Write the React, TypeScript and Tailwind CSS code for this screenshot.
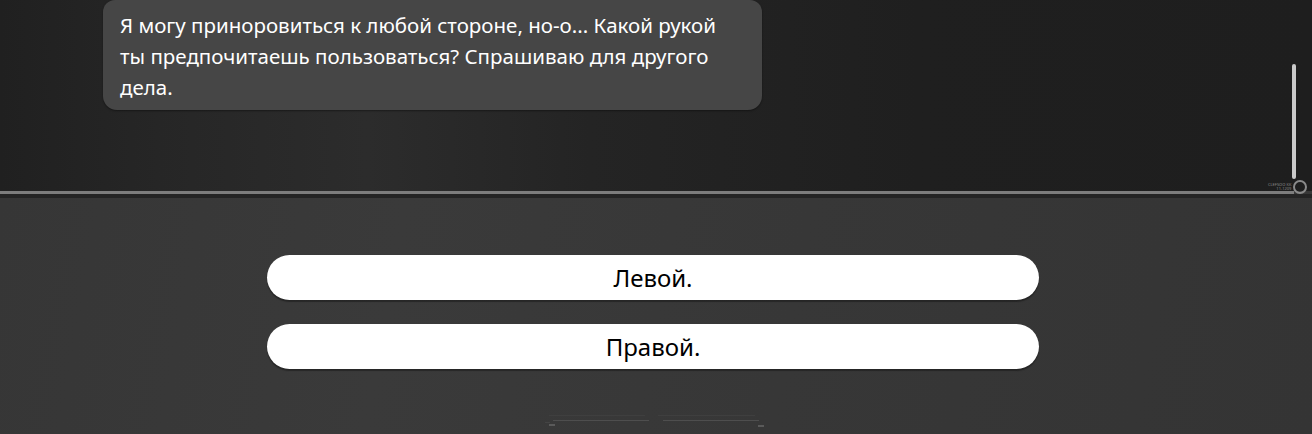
const choices = ['Левой.', 'Правой.'];

export default function App() {
  return (
    <div
      className="relative h-[434px] w-[1312px] overflow-hidden bg-[#373737]"
      style={{ fontFamily: '"Noto Sans", "Open Sans", sans-serif' }}
    >
      {/* Chat area */}
      <div className="flex h-[191px] bg-[linear-gradient(90deg,#202020_0%,#262626_12%,#2c2c2c_28%,#242424_45%,#1f1f1f_70%,#1e1e1e_100%)]">
        <div className="flex-1 pl-[103px]">
          <div className="w-[659px] rounded-b-[14px] rounded-t-[12px] bg-[#464646] pb-[7px] pl-[17px] pr-[30px] pt-[10px] text-[20.5px] leading-[31px] text-white shadow-[0_1px_2px_rgba(0,0,0,0.4)]">
            Я могу приноровиться к любой стороне, но-о... Какой рукой ты предпочитаешь пользоваться? Спрашиваю для другого дела.
          </div>
        </div>

        {/* scrollbar */}
        <div className="flex w-[20px] flex-col items-start pt-[64px]">
          <div className="h-[115px] w-[4px] rounded-full bg-[#c9c9c9]" />
        </div>
      </div>

      {/* watermark + ring */}
      <div className="absolute left-[1268px] top-[180px] flex items-center gap-[2px]">
        <div className="flex flex-col items-end text-[4px] leading-[4px] text-[#8a8a8a]">
          <span>CLEFSOO KK</span>
          <span>11-1209</span>
        </div>
        <div className="h-[14px] w-[14px] rounded-full border-2 border-[#8a8a8a]" />
      </div>

      {/* divider */}
      <div className="mr-[18px] h-[3px] bg-[#7d7d7d]" />
      <div className="h-[4px] bg-[#242424]" />

      {/* choices */}
      <div className="h-[236px] bg-[linear-gradient(100deg,#363636_0%,#3a3a3a_30%,#373737_60%,#343434_100%)] pt-[57px]">
        <div className="ml-[267px] flex w-[772px] flex-col gap-[24px]">
          {choices.map((c) => (
            <button
              key={c}
              className="h-[45px] w-full rounded-full bg-white text-[24px] leading-none text-black shadow-[0_2px_1px_rgba(20,20,20,0.5)]"
            >
              {c}
            </button>
          ))}
        </div>

        {/* bottom ornament */}
        <div className="mt-[46px] flex justify-center gap-[9px] pr-[4px]">
          <div className="flex w-[104px] flex-col">
            <div className="ml-[4px] h-px w-[96px] bg-[#3f3f3f]" />
            <div className="ml-[8px] mt-[4px] h-px w-[96px] bg-[#4e4e4e]" />
            <div className="mt-px h-px w-[5px] bg-[#444]" />
            <div className="ml-[4px] mt-px h-[2px] w-[6px] bg-[#5a5a5a]" />
          </div>
          <div className="flex w-[106px] flex-col">
            <div className="h-px w-[97px] bg-[#3f3f3f]" />
            <div className="ml-[5px] mt-[4px] h-px w-[96px] bg-[#4e4e4e]" />
            <div className="ml-[100px] mt-[4px] h-[2px] w-[6px] bg-[#5a5a5a]" />
          </div>
        </div>
      </div>
    </div>
  );
}
